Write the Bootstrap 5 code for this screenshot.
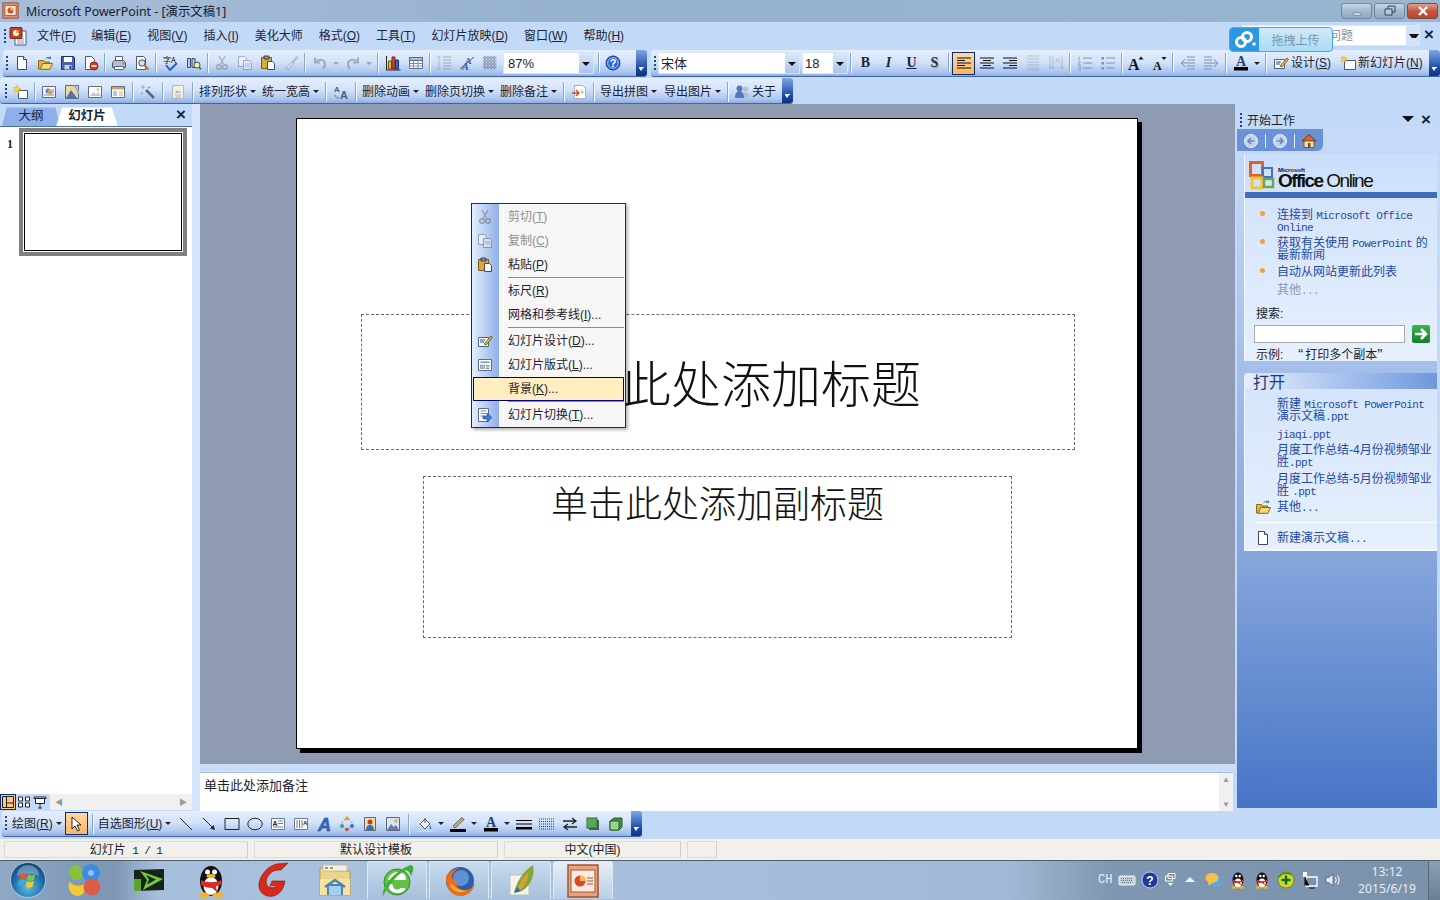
<!DOCTYPE html>
<html>

<head>
  <meta charset="utf-8">
  <meta name="viewport" content="width=device-width">
  <title>Microsoft PowerPoint - [演示文稿1]</title>
  <link href="https://cdn.jsdelivr.net/npm/bootstrap@5.3.2/dist/css/bootstrap.min.css" rel="stylesheet" type="text/css" />
  <script src="https://cdn.jsdelivr.net/npm/bootstrap@5.3.2/dist/js/bootstrap.bundle.min.js"></script>
  <style>
    html, body { margin: 0; height: 900px; overflow: hidden; }
    body { font: 12px/1.2 "Liberation Sans", "Noto Sans CJK SC", sans-serif; color: #1b2230; background: #c3d9f8; }
    .app { width: 1440px; height: 900px; }

    /* title bar */
    .titlebar { height: 22px; background: linear-gradient(90deg, #a6bdd9, #97b2cd 40%, #9ab5d0); }
    .titlebar .apptitle { font: 12.4px "Noto Sans", "Noto Sans CJK SC", sans-serif; margin-left: 7px; color: #14202e; }
    .ttl-ic { width: 17px; height: 17px; margin-left: 2px; }
    .winbtn { width: 31px; height: 16px; margin-left: 2px; border: 1px solid #6f879f; border-radius: 3px; background: linear-gradient(#c6d6e6, #a4b9cf 50%, #8fa8c0); display: flex; align-items: center; justify-content: center; }
    .winbtn svg { width: 14px; height: 12px; }
    .winbtn.closer { background: linear-gradient(#e0a090, #c8563f 50%, #b84530); border-color: #7c4a40; }
    .win-group { margin-left: auto; margin-right: 2px; }

    /* menu bar */
    .menubar { height: 29px; position: relative; }
    .menu-ic { width: 20px; height: 20px; margin-left: 2px; }
    .menu-entry { padding: 0 8px; white-space: nowrap; color: #1c2434; }
    .menu-first { margin-left: 1px; padding-right: 7px; }
    .helpbox { position: absolute; left: 1242px; top: 3px; width: 178px; height: 21px; background: #fff; border: 1px solid #dbe6f6; color: #8b8f98; padding: 3px 2px; white-space: nowrap; overflow: hidden; }
    .helpbox i { position: absolute; right: 0; top: 0; width: 13px; height: 19px; background: #d3e2f8; }
    .helpbox i::after { content: ""; display: block; border: 3.5px solid transparent; border-top: 4px solid #111; margin: 8px 0 0 3px; }
    .helpclose { position: absolute; left: 1424px; top: 5px; font: 700 17px/15px "Liberation Sans", sans-serif; color: #222; }

    /* cloud upload widget lying over the help box */
    .uploader { position: absolute; left: 1229px; top: 27px; width: 104px; height: 25px; border: 1px solid #4aa7e0; border-radius: 4px; overflow: hidden; z-index: 5; background: linear-gradient(#cfeafa, #a8dcf5); color: #7f93a6; }
    .uploader .cloud { width: 29px; height: 100%; background: #2a98e2; }
    .uploader .cloud svg { width: 24px; height: 20px; }
    .uploader .uptext { flex: 1; text-align: center; font-size: 12px; padding-top: 3px; }

    /* toolbars */
    .tbrow { height: 27px; }
    .tbar { height: 27px; background: linear-gradient(#e4effe, #d4e3fa 45%, #aac6ef 85%, #8dade3); border-bottom: 1px solid #40689f; border-radius: 3px; padding-left: 3px; }
    .tbar.std { width: 644px; margin-left: 3px; }
    .tbar.fmt { width: 789px; margin-left: 4px; border-radius: 3px 0 0 3px; }
    .tbar.ext { width: 793px; margin-top: 1px; height: 26px; padding-left: 5px; padding-top: 2px; }
    .tbar.ext .tail { margin-top: -2px; height: 25px; }
    .tbar.drawbar { width: 640px; height: 26px; margin-left: 2px; }
    .grip { width: 2px; height: 15px; margin: 0 2px 0 0; flex: none; background: repeating-linear-gradient(#2a4374 0 2px, transparent 2px 4px); }
    .tbtn { width: 23px; height: 23px; flex: none; display: flex; align-items: center; justify-content: center; }
    .tbtn svg { width: 16px; height: 16px; }
    .tbtn.on { background: linear-gradient(#ffd9a0, #fdb45f); border: 1px solid #0b2a7a; }
    .tbtn.off svg { filter: grayscale(1) opacity(.42); }
    .tsep { width: 1px; height: 20px; margin: 0 2px; flex: none; background: #89a5d2; box-shadow: 1px 0 #f4f8ff; }
    .tsep.wide { margin: 0 3px 0 2px; }
    .tsep.wider { margin: 0 3px; }
    .tsep.widest { margin: 0 4px; }
    .caret-sm { width: 10px; flex: none; display: flex; justify-content: center; }
    .caret-sm::after { content: ""; border: 3px solid transparent; border-top: 3px solid #1b2230; margin-top: 3px; }
    .caret-sm.off::after { border-top-color: #98a6bd; }
    .tlabel { white-space: nowrap; padding: 0 3px; display: flex; align-items: center; }
    .tlabel svg { width: 16px; height: 16px; margin-right: 2px; }
    .tlabel .caret-in { border: 3px solid transparent; border-top: 3px solid #1b2230; margin: 3px 0 0 3px; }
    .lbl-gap { margin-left: 3px; }
    .lbl-gap1 { margin-left: 1px; }
    .combo { height: 22px; background: #fff; border: 1px solid #d9e5f7; position: relative; padding: 3px 2px; flex: none; font-size: 13px; }
    .combo::after { content: ""; position: absolute; right: 0; top: 0; bottom: 0; width: 14px; background: linear-gradient(#dbe8fb, #a9c5ee); }
    .combo::before { content: ""; position: absolute; z-index: 1; right: 3px; top: 9px; border: 4px solid transparent; border-top: 4px solid #111; }
    .combo-zoom { width: 91px; margin-left: 2px; padding-left: 4px; }
    .combo-font { width: 142px; }
    .combo-size { width: 46px; margin-left: 2px; }
    .tail { width: 11px; height: 100%; flex: none; margin-left: auto; position: relative; background: linear-gradient(#7fa6e8, #1c4aa2 70%, #0d3188); border-radius: 0 3px 3px 0; }
    .tail::before { content: ""; position: absolute; left: 3px; bottom: 8px; width: 5px; height: 1px; background: #fff; }
    .tail::after { content: ""; position: absolute; left: 3px; bottom: 3px; border: 2.5px solid transparent; border-top: 3px solid #fff; }
    .glyph { font: 700 14px/1 "Liberation Serif", serif; color: #1c2434; }
    .glyph.ital { font-style: italic; }
    .glyph.under { text-decoration: underline; }
    .glyph.shadowed { color: #333; text-shadow: 1px 1px 1px #8d98aa; }

    /* workspace */
    .workspace { height: 707px; }
    .leftcol { width: 192px; }
    .tabstrip { height: 20px; border-bottom: 1px solid #4d6fa8; position: relative; margin-top: 3px; }
    .pane-tab { position: absolute; top: 0; height: 19px; text-align: center; padding-top: 2px; font-size: 12.5px; }
    .tab-outline { left: 2px; width: 58px; background: #8db0ea; clip-path: polygon(8% 0, 92% 0, 100% 100%, 0 100%); }
    .tab-slides { left: 56px; width: 62px; background: #fff; font-weight: 700; clip-path: polygon(10% 0, 90% 0, 100% 100%, 0 100%); }
    .stripclose { position: absolute; right: 6px; top: 0; font: 700 17px/15px "Liberation Sans", sans-serif; color: #222; }
    .thumbs { background: #fff; height: 667px; padding: 1px 0 0 7px; }
    .thumbnum { font: 700 12px/1 "Liberation Serif", serif; width: 12px; margin-top: 10px; }
    .thumbframe { width: 168px; height: 128px; border: 4px solid #808080; padding: 1px; background: #fff; }
    .thumbframe div { height: 100%; border: 1px solid #000; }
    .viewbar { height: 16px; }
    .viewbtn { width: 16px; height: 16px; flex: none; display: flex; align-items: center; justify-content: center; }
    .viewbtn svg { width: 14px; height: 14px; }
    .viewbtn.on { background: #fdc886; border: 1px solid #0b2a7a; }
    .viewfill { width: 2px; }
    .hscroll { flex: 1; background: #f0f0f0; color: #9a9a9a; font-size: 8px; padding: 0 5px; height: 16px; }
    .vsplit { width: 8px; background: #d5e4fb; }

    .centercol { width: 1035px; }
    .canvasarea { height: 660px; background: #8f9ab3; padding: 14px 1px 0 0; }
    .slide { width: 842px; height: 631px; background: #fff; border: 1px solid #000; box-shadow: 4px 4px 0 #000; position: relative; }
    .holder { position: absolute; border: 1px dashed #6b6b6b; color: #111; text-align: center; font-family: "Liberation Serif", "Noto Sans CJK SC", serif; font-weight: 300; }
    .holder-title { left: 64px; top: 195px; width: 714px; height: 136px; font-size: 50px; line-height: 142px; padding-left: 6px; }
    .holder-sub { left: 126px; top: 357px; width: 589px; height: 162px; font-size: 37px; line-height: 58px; }
    .notes-gap { height: 8px; background: #c9dcf8; }
    .notes { height: 39px; background: #fff; width: 1033px; border-top: 1px solid #a9bfe3; padding: 5px 4px; position: relative; font-size: 13px; }
    .vscroll { position: absolute; right: 0; top: 0; bottom: 0; width: 14px; background: #f0f0f0; color: #9a9a9a; font-size: 8px; text-align: center; padding: 2px 0; }
    .hsplit { width: 2px; }

    /* task pane */
    .taskpane { width: 200px; height: 704px; background: linear-gradient(#c8dcf9, #c3d8f7 10%, #86a6dc 64%, #4775c6); color: #1f4aa4; }
    .taskhead { height: 25px; background: #c3d9f8; color: #1b2230; padding: 8px 0 0 3px; position: relative; font-size: 12px; }
    .taskhead .grip { margin-right: 5px; }
    .taskhead .tri { position: absolute; right: 23px; top: 12px; border: 6px solid transparent; border-top: 6px solid #111; border-bottom: 0; }
    .taskhead .stripclose { right: 6px; top: 8px; }
    .tasknav { width: 86px; height: 22px; background: #6a91d6; border-radius: 0 0 6px 0; padding: 2px 0 0 6px; gap: 6px; }
    .tasknav svg { width: 16px; height: 16px; }
    .tasknav i { width: 1px; height: 14px; background: #e5eefb; }
    .taskcard { margin: 3px 0 0 7px; border-left: 1px solid #f2f7ff; }
    .officehead { height: 38px; padding: 7px 0 0 4px; color: #111; background: linear-gradient(#cbdefa, #d2e3fb); }
    .officehead svg { width: 26px; height: 29px; }
    .office-word { margin: 6px 0 0 3px; line-height: 1; }
    .office-word small { display: block; font: 700 6px/6px "Liberation Sans", sans-serif; margin-bottom: -2px; }
    .office-word b { font: 700 19px/20px "Liberation Sans", sans-serif; letter-spacing: -1.55px; }
    .office-word span { font: 400 19px/20px "Liberation Sans", sans-serif; letter-spacing: -1.5px; }
    .cardbar { height: 6px; background: #3f6ebf; }
    .cardbody { background: linear-gradient(#d4e4fb, #e6f0fd); height: 163px; padding: 11px 0 0 0; }
    .tp-link { position: relative; padding-left: 32px; padding-right: 2px; line-height: 12px; margin-bottom: 4px; color: #1f4aa4; font-size: 12px; }
    .tp-link.dot::before { content: ""; position: absolute; left: 15px; top: 2px; width: 5px; height: 5px; border-radius: 50%; background: #f0a038; }
    .tp-link.muted { color: #8c98ac; margin-top: 6px; }
    .mono { font: 11px/0 "Liberation Mono", monospace; letter-spacing: -.6px; }
    .tp-label { color: #1b2230; padding-left: 11px; font-size: 12px; line-height: 12px; }
    .tp-label.gap12 { margin-top: 12px; }
    .tp-example { margin-left: 15px; }
    .qt { font-size: 15px; line-height: 0; letter-spacing: 2px; }
    .tp-search { padding-left: 9px; margin: 5px 0 6px; }
    .tp-search .form-control { width: 151px; height: 18px; min-height: 0; padding: 0 2px; border: 1px solid #a8a8a8; border-radius: 0; font-size: 12px; background: #fff; }
    .go-btn { width: 18px; height: 18px; margin-left: 7px; background: linear-gradient(#3cb54a, #12802a); border-radius: 2px; }
    .go-btn svg { width: 18px; height: 18px; display: block; }
    .sechead { height: 16px; margin: 12px 0 0 7px; background: linear-gradient(90deg, #e4eefc, #a9c3ef 50%, #6f97dd); border-radius: 4px 0 0 0; color: #1c3a73; font-size: 16px; line-height: 20px; padding-left: 9px; }
    .secbody { margin: 0 0 0 7px; height: 162px; background: linear-gradient(#d6e5fb, #e6f0fd); border-left: 1px solid #f2f7ff; border-bottom: 2px solid #f2f7ff; padding-top: 9px; }
    .tp-link.gap5 { margin-bottom: 5px; }
    .secbody .tp-link.gap6 { margin-bottom: 6px; }
    .secbody .tp-link.gap3 { margin-bottom: 3px; }
    .tp-ic { position: absolute; left: 10px; top: -2px; width: 16px; height: 16px; }
    .secdiv { margin: 9px 0 9px 10px; border-top: 1px solid #fff; }
    .pane-edge { width: 3px; }

    /* status + taskbar */
    .statusbar { height: 22px; background: #f1f0ea; border-top: 1px solid #c7d6ea; padding: 2px 0 0 4px; gap: 6px; }
    .statcell { height: 17px; border: 1px solid #dcdcd2; border-right-color: #cfcfc5; text-align: center; line-height: 16px; color: #222; }
    .statcell .mono { margin-left: 3px; }
    .w244 { width: 244px; } .w177 { width: 177px; } .w30 { width: 30px; }
    .taskbar { height: 40px; background: linear-gradient(90deg, #8fa9c7, #7f98b5 6%, #7f98b5 8%, #a5bfdc 11%, #a9c2de 30%, #a3bad6 70%, #7f97b0 77%, #7a92ab); border-top: 1px solid #4f5f70; }
    .tk-slot { width: 62px; height: 39px; flex: none; display: flex; align-items: center; justify-content: center; }
    .tk-slot svg { width: 36px; height: 36px; }
    .tk-first { width: 56px; }
    .tk-second { padding-right: 6px; }
    .tk-open { width: 60px; height: 38px; margin-right: 2px; border: 1px solid #dfe9f4; border-bottom: 0; border-radius: 3px 3px 0 0; background: linear-gradient(#c9dbee, #a6bfdb); }
    .tk-open.start { margin-left: 1px; }
    .tk-lit { background: linear-gradient(#e6eff8, #b9cee6); }
    .tray { margin-left: auto; height: 100%; color: #eef3f8; }
    .tray svg { width: 18px; height: 18px; display: block; flex: none; }
    .tray-cell { width: 23.5px; flex: none; display: flex; justify-content: center; }
    .tray-cell.w19 { width: 19px; }
    .tray-cell.w26 { width: 26px; }
    .tray-cell.w16 { width: 16px; }
    .tray-cell.w22 { width: 22px; }
    .tray-cell.w25 { width: 25px; }
    .tray-cell.w23 { width: 23px; }
    .tray-ch { font: 12px "Liberation Mono", monospace; margin-right: 5px; }
    .clock { width: 66px; margin-left: 9px; text-align: center; font: 12.2px/17px "Noto Sans", sans-serif; color: #e8eef5; }
    .show-desk { width: 12px; height: 100%; margin-left: 8px; background: linear-gradient(#8d9fb2, #6b7f94); border-left: 1px solid #58697b; }

    /* context menu */
    .ctx.dropdown-menu { position: absolute; left: 471px; top: 203px; width: 155px; height: 225px; padding: 1px; margin: 0; min-width: 0; border: 1px solid #002d96; border-radius: 0; background: linear-gradient(90deg, #e3effe, #8fafe8 27px, #f6f6f6 27px); box-shadow: 2px 2px 3px rgba(0, 0, 0, .3); font-size: 12px; z-index: 6; }
    .ctx .dropdown-item { height: 24px; padding: 0 0 0 35px; color: #1b2230; line-height: 24px; position: relative; background: transparent; }
    .ctx .dropdown-item.disabled { color: #8f8f8f; }
    .ctx .dropdown-item svg { position: absolute; left: 4px; top: 4px; width: 16px; height: 16px; }
    .ctx .dropdown-item.disabled svg { filter: grayscale(1) opacity(.5); }
    .ctx .dropdown-item.lit { background: #ffeec2; border: 1px solid #000080; padding-left: 34px; line-height: 22px; }
    .ctx .dropdown-divider { margin: 0 0 1px 35px; border-top: 1px solid #6e8fc9; opacity: 1; height: 0; }
    u { text-underline-offset: 1px; }
  </style>
</head>

<body>
  <svg width="0" height="0" class="position-absolute">
    <defs>
      <symbol id="i-new" viewBox="0 0 16 16"><path d="M3.500 1.500h6l3 3v10h-9z" fill="#fff" stroke="#3a4a66"/><path d="M9.500 1.500v3h3" fill="#dfe6f2" stroke="#3a4a66"/></symbol>
      <symbol id="i-open" viewBox="0 0 16 16"><path d="M1.500 5.500h5l1 1.500h5v7h-11z" fill="#e2b53d" stroke="#8c6a14"/><path d="M3.200 14.300 5.800 8.500h9.700l-2.600 5.800z" fill="#f8da78" stroke="#8c6a14"/><path d="M8.500 4c1.500-2 3.500-2.200 5-.5M13.500 3.500v-2M13.500 3.500h-2" fill="none" stroke="#3a6cc0"/></symbol>
      <symbol id="i-save" viewBox="0 0 16 16"><path d="M1.500 1.500h12l1 1v12h-13z" fill="#4d61b8" stroke="#1e2d70"/><path d="M4 2h8v5H4z" fill="#fff"/><path d="M4.500 10h7v4.500h-7z" fill="#c9d2ec"/><path d="M9.500 11h1.500v3H9.500z" fill="#1e2d70"/></symbol>
      <symbol id="i-perm" viewBox="0 0 16 16"><path d="M2.500 1.500h6l3 3v10h-9z" fill="#fff" stroke="#4a5a76"/><circle cx="11" cy="11" r="4" fill="#d8402a" stroke="#8e2312"/><path d="M8.500 11h5" stroke="#fff" stroke-width="1.600"/></symbol>
      <symbol id="i-print" viewBox="0 0 16 16"><path d="M4.500 1.500h7v5h-7z" fill="#fff" stroke="#5b6678"/><path d="M1.500 7.500l2-2h9l2 2v5h-13z" fill="#b8bfca" stroke="#4d5868"/><path d="M3.500 11.500h9v3h-9z" fill="#fff" stroke="#5b6678"/><circle cx="12.500" cy="8.500" r="1" fill="#2ea84a"/></symbol>
      <symbol id="i-preview" viewBox="0 0 16 16"><path d="M2.500 1.500h7l2 2v11h-9z" fill="#fff" stroke="#4a5a76"/><circle cx="8" cy="8" r="3.200" fill="#cfe3f7" stroke="#5a4a2a"/><path d="M10.500 10.500l4 4" stroke="#a8792a" stroke-width="2"/></symbol>
      <symbol id="i-spell" viewBox="0 0 16 16"><text x="0" y="8" font-size="8" font-family="Noto Sans CJK SC, sans-serif" fill="#111">字A</text><path d="M3 10l4 5 7-7" fill="none" stroke="#2b5fc0" stroke-width="2"/></symbol>
      <symbol id="i-research" viewBox="0 0 16 16"><path d="M1.500 3.500h3v9h-3zM6 3.500h3v9H6z" fill="#c3c9e8" stroke="#3d4a78"/><circle cx="11" cy="10" r="3" fill="#f3f0a4" stroke="#4c5630"/><path d="M13 12l2 2.500" stroke="#4c8a30" stroke-width="2"/></symbol>
      <symbol id="i-cut" viewBox="0 0 16 16"><path d="M5 1l4.500 8M11 1L6.500 9" stroke="#5c6a80" stroke-width="1.400"/><circle cx="5" cy="12" r="2.300" fill="none" stroke="#3a66b0" stroke-width="1.400"/><circle cx="11" cy="12" r="2.300" fill="none" stroke="#3a66b0" stroke-width="1.400"/></symbol>
      <symbol id="i-copy" viewBox="0 0 16 16"><path d="M1.500 1.500h6l2 2v8h-8z" fill="#fff" stroke="#46608c"/><path d="M6.500 5.500h6l2 2v7h-8z" fill="#eef3fb" stroke="#46608c"/><path d="M8 9h5M8 11h5" stroke="#7d93b8"/></symbol>
      <symbol id="i-paste" viewBox="0 0 16 16"><path d="M1.500 2.500h10v11h-10z" fill="#d9a941" stroke="#7a5a12"/><path d="M4 1h5v3H4z" fill="#8a8f99" stroke="#444"/><path d="M7.500 6.500h5l2 2v6h-7z" fill="#fff" stroke="#3c4c68"/></symbol>
      <symbol id="i-brush" viewBox="0 0 16 16"><path d="M9 7l5-5.500 1 1L10 8z" fill="#b8bdc6" stroke="#5a6270"/><path d="M9 7l1.500 1.500L6 14H2z" fill="#eee" stroke="#6b7280"/></symbol>
      <symbol id="i-undo" viewBox="0 0 16 16"><path d="M3 2.500v5h5" fill="none" stroke="#3a66b0" stroke-width="2"/><path d="M3.500 7C6 3.500 12.500 4 13 9c.2 2-1 3.500-2 4.500" fill="none" stroke="#3a66b0" stroke-width="2"/></symbol>
      <symbol id="i-redo" viewBox="0 0 16 16"><path d="M13 2.500v5H8" fill="none" stroke="#3a66b0" stroke-width="2"/><path d="M12.500 7C10 3.500 3.500 4 3 9c-.2 2 1 3.500 2 4.500" fill="none" stroke="#3a66b0" stroke-width="2"/></symbol>
      <symbol id="i-chart" viewBox="0 0 16 16"><path d="M1.500 1v14h14" fill="none" stroke="#222"/><path d="M3.500 6h3v8h-3z" fill="#e8b92a" stroke="#6b5410"/><path d="M7 2h3v12H7z" fill="#d84a34" stroke="#6e2010"/><path d="M10.500 5h3v9h-3z" fill="#3c68c4" stroke="#1a3070"/></symbol>
      <symbol id="i-table" viewBox="0 0 16 16"><path d="M1.500 2.500h13v11h-13z" fill="#fff" stroke="#5b6b88"/><path d="M1.500 2.500h13v3h-13z" fill="#a9bfe3" stroke="#5b6b88"/><path d="M1.500 8.500h13M1.500 11h13M5.500 5.500v8M10 5.500v8" stroke="#7f90ad"/></symbol>
      <symbol id="i-slayout" viewBox="0 0 16 16"><path d="M1.500 2.500h13v11h-13z" fill="#fff" stroke="#5b6b88"/><path d="M3.500 4.500h9v1.500h-9z" fill="#7f90ad"/><path d="M3.500 8h4v3.500h-4z" fill="#a9bfe3" stroke="#5b6b88" stroke-width=".5"/><path d="M9 8.500h3.500M9 10h3.500M9 11.500h3.500" stroke="#7f90ad"/></symbol>
      <symbol id="i-transition" viewBox="0 0 16 16"><path d="M1.500 1.500h10v13h-10z" fill="#fff" stroke="#5b6b88"/><path d="M3.500 4h6M3.500 6.500h6M3.500 9h4" stroke="#7f90ad"/><path d="M6 9h4V6l5 4.500-5 4.500v-3H6z" fill="#3f78d8" stroke="#1c4aa2" stroke-width=".6"/></symbol>
      <symbol id="i-expand" viewBox="0 0 16 16"><path d="M7 2h8M7 5h8M7 8h8M7 11h8M7 14h8" stroke="#56637a"/><path d="M3 1v14M1 3l2-2 2 2M1 13l2 2 2-2" fill="none" stroke="#7b8799"/></symbol>
      <symbol id="i-showfmt" viewBox="0 0 16 16"><text x="6" y="9" font-size="9" font-weight="700" font-family="Liberation Serif, serif" fill="#3c5a98">A</text><text x="3" y="15" font-size="10" font-style="italic" font-weight="700" font-family="Liberation Serif, serif" fill="#2c58b8">A</text><path d="M1 14L15 2" stroke="#46546e"/></symbol>
      <symbol id="i-grid" viewBox="0 0 16 16"><path d="M1 3h14M1 6h14M1 9h14M1 12h14M3 1v14M6 1v14M9 1v14M12 1v14" stroke="#5c6c8c" stroke-dasharray="1 .5"/></symbol>
      <symbol id="i-help" viewBox="0 0 16 16"><circle cx="8" cy="8" r="7" fill="#2f6bd8" stroke="#123c96"/><circle cx="8" cy="8" r="5.300" fill="none" stroke="#bcd2f5" stroke-width=".8"/><text x="8" y="12" text-anchor="middle" font-size="11" font-weight="700" font-family="Liberation Sans, sans-serif" fill="#fff">?</text></symbol>
      <symbol id="i-left" viewBox="0 0 16 16"><path d="M1 3h14M1 5.500h8M1 8h14M1 10.500h8M1 13h14" stroke="#111" stroke-width="1.200"/></symbol>
      <symbol id="i-center" viewBox="0 0 16 16"><path d="M1 3h14M4 5.500h8M1 8h14M4 10.500h8M1 13h14" stroke="#111" stroke-width="1.200"/></symbol>
      <symbol id="i-right" viewBox="0 0 16 16"><path d="M1 3h14M7 5.500h8M1 8h14M7 10.500h8M1 13h14" stroke="#111" stroke-width="1.200"/></symbol>
      <symbol id="i-dist" viewBox="0 0 16 16"><path d="M2 1h12M2 4h12M2 7h12M2 10h12M2 13h12M2 15h12" stroke="#7b8799"/></symbol>
      <symbol id="i-vert" viewBox="0 0 16 16"><path d="M2 1v13M5 1v13M14 1v13M1 12l1 2 1-2M4 12l1 2 1-2M13 12l1 2 1-2" fill="none" stroke="#7b8799"/><text x="7" y="8" font-size="8" font-family="Liberation Sans, sans-serif" fill="#7b8799">A</text></symbol>
      <symbol id="i-num" viewBox="0 0 16 16"><path d="M6 3h9M6 8h9M6 13h9" stroke="#8492a8"/><path d="M2 1.500v4M1 7h2.500L1 10h3M1 12h3l-1.500 1.500L4 15H1" fill="none" stroke="#8492a8" stroke-width=".8"/></symbol>
      <symbol id="i-bullet" viewBox="0 0 16 16"><path d="M6 3h9M6 8h9M6 13h9" stroke="#8492a8"/><path d="M1.500 2h2.500v2.500H1.500zM1.500 7h2.500v2.500H1.500zM1.500 12h2.500v2.500H1.500z" fill="#8492a8"/></symbol>
      <symbol id="i-growA" viewBox="0 0 16 16"><text x="0" y="15" font-size="16" font-weight="700" font-family="Liberation Serif, serif" fill="#111">A</text><path d="M10.500 4.500l2.500-3 2.500 3z" fill="#111"/></symbol>
      <symbol id="i-shrinkA" viewBox="0 0 16 16"><text x="2" y="15" font-size="12" font-weight="700" font-family="Liberation Serif, serif" fill="#111">A</text><path d="M10.500 2l2.500 3 2.500-3z" fill="#111"/></symbol>
      <symbol id="i-outdent" viewBox="0 0 16 16"><path d="M7 2h8M7 5h8M1 8h14M7 11h8M7 14h8" stroke="#8492a8"/><path d="M5 4L1.500 8 5 12" fill="none" stroke="#7c8aa4"/></symbol>
      <symbol id="i-indent" viewBox="0 0 16 16"><path d="M1 2h8M1 5h8M1 8h14M1 11h8M1 14h8" stroke="#8492a8"/><path d="M11 4l3.500 4L11 12" fill="none" stroke="#7c8aa4"/></symbol>
      <symbol id="i-fontcolor" viewBox="0 0 16 16"><text x="8" y="11" text-anchor="middle" font-size="14" font-weight="700" font-family="Liberation Serif, serif" fill="#2b3f78">A</text><path d="M1 12h14v3.500H1z" fill="#000"/></symbol>
      <symbol id="i-design" viewBox="0 0 16 16"><path d="M1.500 4.500h10v9h-10z" fill="#fff" stroke="#4a6290"/><path d="M3 7h5M3 9h4" stroke="#5d85c8" stroke-width="1.500"/><path d="M7 11L14 3l1.500 1.300L9 12z" fill="#e9c254" stroke="#7a5d12"/></symbol>
      <symbol id="i-newslide" viewBox="0 0 16 16"><path d="M4.500 5.500h11v9h-11z" fill="#fff" stroke="#4a5a76"/><path d="M1 2l1.500 1L4 .5 4.500 3 7 3 5.500 4.500l.5 2.500-2.500-1L1.500 7 2 4.500z" fill="#f5d64a" stroke="#d8a916" stroke-width=".5"/></symbol>
      <symbol id="i-pptdoc" viewBox="0 0 20 20"><path d="M7 5h11v14H7z" fill="#fff" stroke="#475a80"/><path d="M9 13h7M9 15h7M9 17h7" stroke="#8a9ab8"/><rect x="2" y="1.500" width="12" height="11" rx="1" fill="#c33e22" stroke="#7a2612"/><circle cx="8" cy="7" r="3" fill="#fff"/><path d="M8 7V4a3 3 0 0 1 3 3z" fill="#e5a33a"/></symbol>
      <symbol id="i-ppt" viewBox="0 0 18 18"><rect x="1" y="1" width="16" height="16" fill="#e7a380" stroke="#9e3f1c"/><rect x="3" y="3.500" width="12" height="11" fill="#f7e7dc" stroke="#ae4a22"/><circle cx="9" cy="9" r="3.200" fill="#d64a26"/><path d="M9 9V5.800A3.200 3.200 0 0 1 12.200 9z" fill="#f0bc5a"/></symbol>
      <symbol id="i-newsun" viewBox="0 0 16 16"><path d="M5.500 6.500h9v8h-9z" fill="#fff" stroke="#4a5a76"/><path d="M4 1l1 3 3 .5-2.500 1.500.5 3-2-2-3 1 1-3L0 3.500 3 3.500z" fill="#f5d64a" stroke="#d8a916" stroke-width=".5"/></symbol>
      <symbol id="i-pic1" viewBox="0 0 16 16"><path d="M1.500 2.500h13v11h-13z" fill="#f3f6fc" stroke="#5b6b88"/><circle cx="7" cy="7" r="2.500" fill="#5b81c6"/><circle cx="9" cy="8" r="2.500" fill="#dca44c"/><path d="M11 6h2M11 8h2M3 11h10" stroke="#7f90ad"/></symbol>
      <symbol id="i-pic2" viewBox="0 0 16 16"><path d="M1.500 1.500h13v13h-13z" fill="#e9d9a0" stroke="#5b6b88"/><path d="M2 14L7 6l6 8z" fill="#4d73b6"/><path d="M10 2c3 2 4 5 4 8" stroke="#9ab4de" stroke-width="2" fill="none"/></symbol>
      <symbol id="i-pic3" viewBox="0 0 16 16"><path d="M1.500 2.500h13v11h-13z" fill="#fff" stroke="#5b6b88"/><path d="M3 12l3.500-4 2.500 2.500L11 8l3 4z" fill="#b9c8df"/><circle cx="11" cy="5.500" r="1.300" fill="#e8b64c"/></symbol>
      <symbol id="i-pic4" viewBox="0 0 16 16"><path d="M1.500 2.500h13v11h-13z" fill="#fff" stroke="#5b6b88"/><path d="M2 3h12v2.500H2z" fill="#e0a25a"/><path d="M3 7h4v5H3z" fill="#b9c8df"/><path d="M9 7h4v5H9z" fill="#f0d9a0"/></symbol>
      <symbol id="i-wand" viewBox="0 0 16 16"><path d="M6 6l8 8" stroke="#5b6678" stroke-width="2.500"/><path d="M3 1v4M1 3h4M9 2v3M7.500 3.500h3M2 8v2M1 9h2" stroke="#8ea7d0"/></symbol>
      <symbol id="i-layout" viewBox="0 0 16 16"><path d="M2.500 1.500h11v13h-11z" fill="#f5f0dc" stroke="#aeb6c6"/><path d="M5 11h6M5 13h6" stroke="#aeb6c6"/><path d="M5 9l2-3 1.500 2 1-1 1.500 2z" fill="#aeb6c6"/></symbol>
      <symbol id="i-fontsw" viewBox="0 0 16 16"><text x="1" y="8" font-size="8" font-weight="700" font-family="Liberation Sans, sans-serif" fill="#4d5e7e">A</text><text x="7" y="15" font-size="11" font-weight="700" font-family="Liberation Sans, sans-serif" fill="#4d5e7e">A</text><path d="M2 11c1 3 2 3 4 3" fill="none" stroke="#c44d3a"/></symbol>
      <symbol id="i-import" viewBox="0 0 16 16"><path d="M3.500 1.500h8l3 3v10h-11z" fill="#fff" stroke="#a7b0c0"/><path d="M1 9h7M5 6l3 3-3 3" fill="none" stroke="#cc4730" stroke-width="1.400"/><path d="M10 5l3 4h-3z" fill="#e6b75c"/></symbol>
      <symbol id="i-person" viewBox="0 0 16 16"><circle cx="11.500" cy="5" r="2.500" fill="#b8bfca"/><path d="M8 14c0-4 1.500-6 3.500-6s3.500 2 3.500 6z" fill="#b8bfca"/><circle cx="5.500" cy="4.500" r="3" fill="#4f7bbb"/><path d="M1 14c0-5 2-7 4.500-7s4.500 2 4.500 7z" fill="#4f7bbb"/></symbol>
      <symbol id="i-line" viewBox="0 0 16 16"><path d="M2 2l12 12" stroke="#222"/></symbol>
      <symbol id="i-arrowline" viewBox="0 0 16 16"><path d="M2 2l10 10" stroke="#222"/><path d="M14 14l-5-1.500L12.500 9z" fill="#222"/></symbol>
      <symbol id="i-rect" viewBox="0 0 16 16"><path d="M1 2.500h14v11H1z" fill="none" stroke="#222"/></symbol>
      <symbol id="i-oval" viewBox="0 0 16 16"><ellipse cx="8" cy="8" rx="7.200" ry="5.800" fill="none" stroke="#222"/></symbol>
      <symbol id="i-textbox" viewBox="0 0 16 16"><path d="M1.500 2.500h13v11h-13z" fill="#fff" stroke="#6b7a96"/><text x="2.500" y="9.500" font-size="7" font-weight="700" font-family="Liberation Sans, sans-serif" fill="#222">A</text><path d="M8 5h5M8 7.500h5M3 11h10" stroke="#6b7a96"/></symbol>
      <symbol id="i-vtext" viewBox="0 0 16 16"><path d="M1.500 2.500h13v11h-13z" fill="#fff" stroke="#6b7a96"/><path d="M4 4v8M6.500 4v8M9 4v8" stroke="#6b7a96"/><text x="10" y="9" font-size="6" font-weight="700" font-family="Liberation Sans, sans-serif" fill="#222">A</text></symbol>
      <symbol id="i-wordart" viewBox="0 0 16 16"><text x="2" y="15" font-size="18" font-style="italic" font-weight="700" font-family="Liberation Sans, sans-serif" fill="#3a6cc8" stroke="#173a80" stroke-width=".5">A</text></symbol>
      <symbol id="i-diagram" viewBox="0 0 16 16"><circle cx="8" cy="8" r="5" fill="none" stroke="#7d8ea8" stroke-dasharray="2 2"/><circle cx="8" cy="2.500" r="2" fill="#e0a02e"/><circle cx="13" cy="10" r="2" fill="#3c74c8"/><circle cx="3" cy="10" r="2" fill="#3ca85a"/><circle cx="8" cy="13.500" r="1.800" fill="#d84a34"/></symbol>
      <symbol id="i-clipart" viewBox="0 0 16 16"><path d="M2.500 1.500h11v13h-11z" fill="#f1d9a6" stroke="#5b6678"/><circle cx="8" cy="6" r="2.500" fill="#a3492a"/><path d="M4 14c0-4 2-5 4-5s4 1 4 5z" fill="#3f6fb8"/></symbol>
      <symbol id="i-picture" viewBox="0 0 16 16"><path d="M1.500 1.500h13v13h-13z" fill="#d7e4f7" stroke="#5b6678"/><path d="M2 14l4-6 3 3 2-2 3 5z" fill="#5f7fae"/><circle cx="11" cy="5" r="1.800" fill="#e8a34c"/></symbol>
      <symbol id="i-fill" viewBox="0 0 16 16"><path d="M3 8l5-5 5 5-5 5z" fill="#eef1f6" stroke="#4a566b"/><path d="M8 2V7" stroke="#4a566b"/><path d="M13 9c1 1.500 2 3 1 4s-2-.5-1-4z" fill="#3c8ac8"/><path d="M0 14.500h16V16H0z" fill="#c7dcf5"/></symbol>
      <symbol id="i-pen" viewBox="0 0 16 16"><path d="M3 10L12 1.500l2 2L5 12z" fill="#e0b23c" stroke="#4c5f8a"/><path d="M0 13h16v3H0z" fill="#000"/></symbol>
      <symbol id="i-lines" viewBox="0 0 16 16"><path d="M0 4.500h16M0 8h16" stroke="#000"/><path d="M0 11h16v2.500H0z" fill="#000"/></symbol>
      <symbol id="i-dash" viewBox="0 0 16 16"><path d="M0 3h16M0 5.500h16M0 8h16M0 10.500h16M0 13h16" stroke="#2e3a50" stroke-dasharray="1 1"/></symbol>
      <symbol id="i-arrows" viewBox="0 0 16 16"><path d="M1 5h13M10 2l4 3-4 3M15 11H2M6 8l-4 3 4 3" fill="none" stroke="#222" stroke-width="1.300"/></symbol>
      <symbol id="i-shadow" viewBox="0 0 16 16"><rect x="4" y="4" width="10" height="10" fill="#4c5c4e"/><rect x="2" y="2" width="10" height="10" fill="#58a85c" stroke="#2d6f34"/></symbol>
      <symbol id="i-threed" viewBox="0 0 16 16"><path d="M2 5l4-3h8v9l-3 3H2z" fill="#3e8f48" stroke="#235a2c"/><path d="M2 5h9v9H2z" fill="#9fd08f" stroke="#235a2c"/></symbol>
      <symbol id="i-cursor" viewBox="0 0 16 16"><path d="M4 1v12l3-3 2.500 5 2-1L9 9h4z" fill="#fff" stroke="#222"/></symbol>
      <symbol id="i-normal" viewBox="0 0 14 14"><path d="M1.500 1.500h11v11h-11z" fill="none" stroke="#222"/><path d="M5.500 1.500v11M5.500 8h7" stroke="#222"/></symbol>
      <symbol id="i-sorter" viewBox="0 0 14 14"><path d="M1.500 2h4v4h-4zM8.500 2h4v4h-4zM1.500 8h4v4h-4zM8.500 8h4v4h-4z" fill="#fff" stroke="#222"/></symbol>
      <symbol id="i-show" viewBox="0 0 14 14"><path d="M1 2h12v1.500H1zM2.500 3.500h9v5h-9z" fill="#fff" stroke="#222"/><path d="M7 9v4M5 13h4" stroke="#222"/></symbol>
      <symbol id="i-back" viewBox="0 0 16 16"><circle cx="8" cy="8" r="6.500" fill="#c3d4ee" stroke="#edf3fb"/><path d="M11.500 8h-6M8 5L5 8l3 3" fill="none" stroke="#6d86ae" stroke-width="1.600"/></symbol>
      <symbol id="i-fwd" viewBox="0 0 16 16"><circle cx="8" cy="8" r="6.500" fill="#c3d4ee" stroke="#edf3fb"/><path d="M4.500 8h6M8 5l3 3-3 3" fill="none" stroke="#6d86ae" stroke-width="1.600"/></symbol>
      <symbol id="i-home" viewBox="0 0 16 16"><path d="M1 8l7-6.500L15 8z" fill="#d8662c" stroke="#7a3410"/><path d="M3 8h10v6.500H3z" fill="#f5e1a6" stroke="#7a5a20"/><path d="M7 10h2.500v4.500H7z" fill="#7c4a20"/></symbol>
      <symbol id="i-logo" viewBox="0 0 26 29"><rect x="1.500" y="1.500" width="12" height="13" fill="none" stroke="#e0602a" stroke-width="3"/><rect x="14" y="7" width="9" height="9" fill="none" stroke="#3f73c8" stroke-width="2"/><rect x="3" y="17" width="10" height="10" fill="none" stroke="#f0c338" stroke-width="3"/><rect x="15" y="18" width="9" height="8" fill="none" stroke="#69a84c" stroke-width="2.400"/></symbol>
      <symbol id="i-go" viewBox="0 0 18 18"><path d="M3 9h10M9 4l5 5-5 5" fill="none" stroke="#fff" stroke-width="2.600"/></symbol>
      <symbol id="i-cloud" viewBox="0 0 24 20"><circle cx="8" cy="12" r="4.500" fill="none" stroke="#fff" stroke-width="3"/><circle cx="14" cy="7" r="4.500" fill="none" stroke="#fff" stroke-width="3"/><circle cx="21" cy="14" r="1.800" fill="#fff"/></symbol>
      <symbol id="t-orb" viewBox="0 0 36 36"><defs><radialGradient id="orbfill" cx=".5" cy=".7" r=".7"><stop offset="0" stop-color="#5cc0e8"/><stop offset=".6" stop-color="#1f6fa8"/><stop offset="1" stop-color="#123f68"/></radialGradient></defs><circle cx="18" cy="18" r="17.500" fill="url(#orbfill)" stroke="#cfe2f2" stroke-width=".7"/><path d="M7 14c0-7 5-11 11-11s11 4 11 11c-6-3-16-3-22 0z" fill="#dff0fb" opacity=".35"/><path d="M10 12c2.500-1.500 4.500-1.500 7 0l-1 5.500c-2.500-1.500-4.500-1.500-7 0z" fill="#e8552e"/><path d="M18 12.300c2.500 1.500 4.500 1.500 7 0l-1 5.500c-2.500 1.500-4.500 1.500-7 0z" fill="#86c440"/><path d="M8.800 18.700c2.500-1.500 4.500-1.500 7 0l-1 5.500c-2.500-1.500-4.500-1.500-7 0z" fill="#3ea8e6"/><path d="M16.800 19c2.500 1.500 4.500 1.500 7 0l-1 5.500c-2.500 1.500-4.500 1.500-7 0z" fill="#f5c52c"/></symbol>
      <symbol id="t-color" viewBox="0 0 36 36"><path d="M18 14C17 6 12 2 8 3 3 5 2 13 6 17c3 2 8 1 12-3z" fill="#88c23c"/><circle cx="25" cy="11" r="9" fill="#3c8ce0"/><circle cx="25" cy="11" r="3" fill="#8cc0f0"/><path d="M3 20c-2 8 3 14 9 14 6-.5 8-6 6-12-4 3-10 2-15-2z" fill="#f3c92e"/><circle cx="26" cy="25" r="8.500" fill="#dd5c4a"/></symbol>
      <symbol id="t-play" viewBox="0 0 36 36"><path d="M3 8l30-1v21l-30 1z" fill="#172318"/><path d="M3 17h7v12H3z" fill="#5ba52f"/><path d="M9 9l23 8-20 11 4-10z" fill="#74c93a"/><path d="M15 13l10 4.500-9 5 2-5z" fill="#172318"/></symbol>
      <symbol id="t-qq" viewBox="0 0 36 36"><ellipse cx="18" cy="19" rx="11" ry="15" fill="#111"/><ellipse cx="18" cy="24" rx="7.500" ry="9" fill="#fff"/><circle cx="14.500" cy="10" r="2.500" fill="#fff"/><circle cx="21.500" cy="10" r="2.500" fill="#fff"/><ellipse cx="18" cy="14" rx="4.500" ry="2" fill="#f5b41e"/><path d="M8 18c6 3 14 3 20 0l1 4c-2 1.500-5 2-6 2l1 6-5-4c-4 0-8-1-11-3z" fill="#e02a20"/><ellipse cx="11" cy="33" rx="5.500" ry="2.500" fill="#f5b41e"/><ellipse cx="25" cy="33" rx="5.500" ry="2.500" fill="#f5b41e"/></symbol>
      <symbol id="t-red" viewBox="0 0 36 36"><path d="M22 2l11-1-7 7c-6-.5-10 1.500-13 6-3 5-2 9 1 11 3 1.500 6 .5 8-2l-7 1 2-5h13c-1 6-3 10-7 13-5 3.500-12 3-16-1-4.500-5-4-12 1-19 4-6 9-9 14-10z" fill="#d72a1c" stroke="#8a1208" stroke-width=".6"/></symbol>
      <symbol id="t-folder" viewBox="0 0 36 36"><path d="M3 6h12l3 3h15v24H3z" fill="#ecd488" stroke="#b69a4c"/><path d="M6 3h24v6H6z" fill="#f4f1e4" stroke="#c4bd9e"/><path d="M8 5h3v2H8zM13 5h3v2h-3z" fill="#7cb04c"/><path d="M3 17h30v16H3z" fill="#f7e39e"/><path d="M11 33V23h14v10" fill="#a2d0ea" stroke="#4a86b0" stroke-width="2"/><path d="M8 25l10-7 10 7" fill="none" stroke="#4a86b0" stroke-width="2.400"/></symbol>
      <symbol id="t-ie" viewBox="0 0 36 36"><circle cx="18" cy="19" r="13" fill="#62c248" stroke="#2d8a22"/><path d="M9 17h18c0-6-3.500-8-8-8-5 0-9 3-10 8zM9 21c.5 6 4.500 9 9.500 9 4 0 7-2 8-5h-5c-1 1-2 1.500-3.500 1.500-2.500 0-4.500-2-4.500-5.500z" fill="#fff"/><path d="M4 33C2 26 14 8 32 2c3 1 3 5 0 11-1-4-3-5-5-6C16 12 8 26 4 33z" fill="#3fae34"/></symbol>
      <symbol id="t-fox" viewBox="0 0 36 36"><circle cx="19" cy="18" r="14" fill="#2a5ea8"/><circle cx="20" cy="15" r="8" fill="#5f90cf"/><path d="M5 13c-1 12 6 21 16 20 7-1 12-6 13-13-2 5-7 8-12 7-5-1-8-5-6-9-3 0-5-2-5-5 1-4 4-7 8-8-5 0-10 3-14 8z" fill="#ec6d1e"/><path d="M9 22c3 7 11 9 17 5-4 1-9 0-12-3-2-2-4-3-5-2z" fill="#f7b32a"/></symbol>
      <symbol id="t-quill" viewBox="0 0 36 36"><path d="M7 12h19v20H7z" fill="#f5f3ec" stroke="#c4c0b0"/><path d="M11 30C13 20 20 8 30 2c2 8-1 20-11 26z" fill="#7fa83c"/><path d="M15 26c2-7 6-13 11-18-1 7-4 15-9 20z" fill="#e59c2e"/><path d="M11 30l3-6 4 4z" fill="#2a6eb8"/></symbol>
      <symbol id="t-ppt" viewBox="0 0 36 36"><rect x="3" y="2" width="30" height="32" fill="#e6a382" stroke="#a34a22" stroke-width="1.400"/><rect x="6" y="7" width="24" height="22" fill="#f8ebe2" stroke="#b25226"/><circle cx="15" cy="18" r="5.500" fill="#d64a26"/><path d="M15 18v-5.500a5.500 5.500 0 0 1 5.500 5.500z" fill="#f0bc5a"/><path d="M22 15h6M22 18h6M22 21h6" stroke="#b25226"/></symbol>
      <symbol id="y-kbd" viewBox="0 0 18 18"><rect x="1" y="5" width="16" height="9" rx="1" fill="#c8d0da" stroke="#eef2f6"/><path d="M3 7.500h12M3 9.500h12M4 11.500h10" stroke="#66778a" stroke-dasharray="1 1"/></symbol>
      <symbol id="y-help" viewBox="0 0 18 18"><circle cx="9" cy="9" r="8" fill="#1b3c9c" stroke="#b8c8ec"/><text x="9" y="13.500" text-anchor="middle" font-size="12" font-weight="700" font-family="Liberation Sans, sans-serif" fill="#fff">?</text></symbol>
      <symbol id="y-win" viewBox="0 0 18 18"><path d="M6 2.500h7v5H6zM3.500 5h7v5h-7z" fill="#73889e" stroke="#fff"/><path d="M6 12h5l-2.500 3z" fill="#fff"/></symbol>
      <symbol id="y-up" viewBox="0 0 18 18"><path d="M4 11l5-5 5 5z" fill="#eef2f6"/></symbol>
      <symbol id="y-weather" viewBox="0 0 18 18"><circle cx="11" cy="10" r="6" fill="#58a8e8"/><ellipse cx="7" cy="7" rx="6.500" ry="5" fill="#f3c34a"/><path d="M3 11l1 4 3-3z" fill="#f3c34a"/></symbol>
      <symbol id="y-qq" viewBox="0 0 18 18"><ellipse cx="9" cy="9" rx="5.500" ry="7.500" fill="#111"/><ellipse cx="9" cy="12" rx="3.800" ry="4.500" fill="#fff"/><circle cx="7.300" cy="5" r="1.200" fill="#fff"/><circle cx="10.700" cy="5" r="1.200" fill="#fff"/><path d="M4 9c3 1.500 7 1.500 10 0v2H11l1 3-3-2H4z" fill="#e02a20"/><ellipse cx="5.500" cy="16.500" rx="3" ry="1.300" fill="#f5b41e"/><ellipse cx="12.500" cy="16.500" rx="3" ry="1.300" fill="#f5b41e"/></symbol>
      <symbol id="y-360" viewBox="0 0 18 18"><circle cx="9" cy="9" r="8" fill="#d6d626" stroke="#6c8a1c"/><path d="M9 4.500v9M4.500 9h9" stroke="#0d6a28" stroke-width="2.400"/><path d="M2 6c3-4 9-5 13-2" fill="none" stroke="#2e8c34" stroke-width="1.500"/></symbol>
      <symbol id="y-net" viewBox="0 0 18 18"><path d="M5 6h11v9H5z" fill="#7b92ab" stroke="#fff" stroke-width="1.300"/><path d="M2 1h4v5H2z" fill="#fff"/><path d="M4 6v8h4M8 17h6" stroke="#111" stroke-width="1.100"/></symbol>
      <symbol id="y-vol" viewBox="0 0 18 18"><path d="M2 6.500h3L9 3v12l-4-3.500H2z" fill="#e6ecf2" stroke="#47566a" stroke-width=".7"/><path d="M11 6c1.500 2 1.500 4 0 6M13.500 4.500c2 3 2 6 0 9" fill="none" stroke="#e6ecf2" stroke-width="1.200"/></symbol>
    </defs>
  </svg>

  <div class="app d-flex flex-column position-relative">
    <header class="titlebar d-flex align-items-center">
      <svg class="ttl-ic"><use href="#i-ppt"/></svg>
      <span class="apptitle">Microsoft PowerPoint - [演示文稿1]</span>
      <div class="win-group d-flex">
        <div class="winbtn"><svg viewBox="0 0 14 12"><path d="M3 8h8v2H3z" fill="#fff" stroke="#51677e" stroke-width=".6"/></svg></div>
        <div class="winbtn"><svg viewBox="0 0 14 12"><path d="M5 1h7v6H5z" fill="none" stroke="#334458"/><path d="M2 4h7v6H2z" fill="#b6c9dc" stroke="#334458"/></svg></div>
        <div class="winbtn closer"><svg viewBox="0 0 14 12"><path d="M3 2l8 8M11 2l-8 8" stroke="#fff" stroke-width="2.400"/></svg></div>
      </div>
    </header>

    <nav class="menubar d-flex align-items-center">
      <span class="grip ms-1 me-0"></span>
      <svg class="menu-ic"><use href="#i-pptdoc"/></svg>
      <span class="menu-entry menu-first">文件(<u>F</u>)</span>
      <span class="menu-entry">编辑(<u>E</u>)</span>
      <span class="menu-entry">视图(<u>V</u>)</span>
      <span class="menu-entry">插入(<u>I</u>)</span>
      <span class="menu-entry">美化大师</span>
      <span class="menu-entry">格式(<u>O</u>)</span>
      <span class="menu-entry">工具(<u>T</u>)</span>
      <span class="menu-entry">幻灯片放映(<u>D</u>)</span>
      <span class="menu-entry">窗口(<u>W</u>)</span>
      <span class="menu-entry">帮助(<u>H</u>)</span>
      <div class="helpbox">键入需要帮助的问题<i></i></div>
      <span class="helpclose">×</span>
    </nav>

    <div class="uploader d-flex align-items-center">
      <div class="cloud d-flex align-items-center justify-content-center"><svg><use href="#i-cloud"/></svg></div>
      <div class="uptext">拖拽上传</div>
    </div>

    <div class="tbrow d-flex">
      <div class="tbar std d-flex align-items-center">
        <span class="grip"></span>
        <span class="tbtn"><svg><use href="#i-new"/></svg></span>
        <span class="tbtn"><svg><use href="#i-open"/></svg></span>
        <span class="tbtn"><svg><use href="#i-save"/></svg></span>
        <span class="tbtn"><svg><use href="#i-perm"/></svg></span>
        <span class="tsep"></span>
        <span class="tbtn"><svg><use href="#i-print"/></svg></span>
        <span class="tbtn"><svg><use href="#i-preview"/></svg></span>
        <span class="tsep wide"></span>
        <span class="tbtn"><svg><use href="#i-spell"/></svg></span>
        <span class="tbtn"><svg><use href="#i-research"/></svg></span>
        <span class="tsep"></span>
        <span class="tbtn off"><svg><use href="#i-cut"/></svg></span>
        <span class="tbtn off"><svg><use href="#i-copy"/></svg></span>
        <span class="tbtn"><svg><use href="#i-paste"/></svg></span>
        <span class="tbtn off"><svg><use href="#i-brush"/></svg></span>
        <span class="tsep wide"></span>
        <span class="tbtn off"><svg><use href="#i-undo"/></svg></span>
        <span class="caret-sm off"></span>
        <span class="tbtn off"><svg><use href="#i-redo"/></svg></span>
        <span class="caret-sm off"></span>
        <span class="tsep wider"></span>
        <span class="tbtn"><svg><use href="#i-chart"/></svg></span>
        <span class="tbtn"><svg><use href="#i-table"/></svg></span>
        <span class="tsep"></span>
        <span class="tbtn off"><svg><use href="#i-expand"/></svg></span>
        <span class="tbtn"><svg><use href="#i-showfmt"/></svg></span>
        <span class="tbtn"><svg><use href="#i-grid"/></svg></span>
        <span class="combo combo-zoom">87%</span>
        <span class="tsep ms-1"></span>
        <span class="tbtn"><svg><use href="#i-help"/></svg></span>
        <span class="tail"></span>
      </div>
      <div class="tbar fmt d-flex align-items-center">
        <span class="grip"></span>
        <span class="combo combo-font">宋体</span>
        <span class="combo combo-size">18</span>
        <span class="tsep wide"></span>
        <span class="tbtn"><span class="glyph">B</span></span>
        <span class="tbtn"><span class="glyph ital">I</span></span>
        <span class="tbtn"><span class="glyph under">U</span></span>
        <span class="tbtn"><span class="glyph shadowed">S</span></span>
        <span class="tsep wide"></span>
        <span class="tbtn on"><svg><use href="#i-left"/></svg></span>
        <span class="tbtn"><svg><use href="#i-center"/></svg></span>
        <span class="tbtn"><svg><use href="#i-right"/></svg></span>
        <span class="tbtn off"><svg><use href="#i-dist"/></svg></span>
        <span class="tbtn off"><svg><use href="#i-vert"/></svg></span>
        <span class="tsep wide"></span>
        <span class="tbtn"><svg><use href="#i-num"/></svg></span>
        <span class="tbtn"><svg><use href="#i-bullet"/></svg></span>
        <span class="tsep"></span>
        <span class="tbtn"><svg><use href="#i-growA"/></svg></span>
        <span class="tbtn"><svg><use href="#i-shrinkA"/></svg></span>
        <span class="tsep wide"></span>
        <span class="tbtn"><svg><use href="#i-outdent"/></svg></span>
        <span class="tbtn"><svg><use href="#i-indent"/></svg></span>
        <span class="tsep wider"></span>
        <span class="tbtn"><svg><use href="#i-fontcolor"/></svg></span>
        <span class="caret-sm"></span>
        <span class="tsep wider"></span>
        <span class="tlabel lbl-gap1"><svg><use href="#i-design"/></svg>设计(<u>S</u>)</span>
        <span class="tlabel lbl-gap"><svg><use href="#i-newslide"/></svg>新幻灯片(<u>N</u>)</span>
        <span class="tail"></span>
      </div>
    </div>

    <div class="tbrow d-flex">
      <div class="tbar ext d-flex align-items-center">
        <span class="grip"></span>
        <span class="tbtn"><svg><use href="#i-newsun"/></svg></span>
        <span class="tsep"></span>
        <span class="tbtn"><svg><use href="#i-pic1"/></svg></span>
        <span class="tbtn"><svg><use href="#i-pic2"/></svg></span>
        <span class="tbtn"><svg><use href="#i-pic3"/></svg></span>
        <span class="tbtn"><svg><use href="#i-pic4"/></svg></span>
        <span class="tsep wider"></span>
        <span class="tbtn"><svg><use href="#i-wand"/></svg></span>
        <span class="tsep wider"></span>
        <span class="tbtn"><svg><use href="#i-layout"/></svg></span>
        <span class="tsep wider"></span>
        <span class="tlabel">排列形状<i class="caret-in"></i></span>
        <span class="tlabel">统一宽高<i class="caret-in"></i></span>
        <span class="tsep wider"></span>
        <span class="tbtn"><svg><use href="#i-fontsw"/></svg></span>
        <span class="tsep wider"></span>
        <span class="tlabel">删除动画<i class="caret-in"></i></span>
        <span class="tlabel">删除页切换<i class="caret-in"></i></span>
        <span class="tlabel">删除备注<i class="caret-in"></i></span>
        <span class="tsep wider"></span>
        <span class="tbtn"><svg><use href="#i-import"/></svg></span>
        <span class="tsep wider"></span>
        <span class="tlabel">导出拼图<i class="caret-in"></i></span>
        <span class="tlabel lbl-gap1">导出图片<i class="caret-in"></i></span>
        <span class="tsep wider"></span>
        <span class="tlabel"><svg><use href="#i-person"/></svg>关于</span>
        <span class="tail"></span>
      </div>
    </div>

    <main class="workspace d-flex">
      <aside class="leftcol d-flex flex-column">
        <div class="tabstrip">
          <span class="pane-tab tab-outline">大纲</span>
          <span class="pane-tab tab-slides">幻灯片</span>
          <span class="stripclose">×</span>
        </div>
        <div class="thumbs d-flex">
          <div class="thumbnum">1</div>
          <div class="thumbframe"><div></div></div>
        </div>
        <div class="viewbar d-flex">
          <span class="viewbtn on"><svg><use href="#i-normal"/></svg></span>
          <span class="viewbtn"><svg><use href="#i-sorter"/></svg></span>
          <span class="viewbtn"><svg><use href="#i-show"/></svg></span>
          <span class="viewfill"></span>
          <div class="hscroll d-flex justify-content-between align-items-center"><span>◀</span><span>▶</span></div>
        </div>
      </aside>
      <div class="vsplit"></div>
      <section class="centercol d-flex flex-column">
        <div class="canvasarea d-flex justify-content-center">
          <div class="slide">
            <div class="holder holder-title">单击此处添加标题</div>
            <div class="holder holder-sub">单击此处添加副标题</div>
          </div>
        </div>
        <div class="notes-gap"></div>
        <div class="notes">单击此处添加备注
          <div class="vscroll d-flex flex-column justify-content-between"><span>▲</span><span>▼</span></div>
        </div>
      </section>
      <div class="hsplit"></div>
      <aside class="taskpane">
        <div class="taskhead d-flex align-items-center">
          <span class="grip"></span>开始工作
          <span class="tri"></span>
          <span class="stripclose">×</span>
        </div>
        <div class="tasknav d-flex align-items-center">
          <svg><use href="#i-back"/></svg><i></i>
          <svg><use href="#i-fwd"/></svg><i></i>
          <svg><use href="#i-home"/></svg>
        </div>
        <div class="taskcard">
          <div class="officehead d-flex">
            <svg><use href="#i-logo"/></svg>
            <div class="office-word"><small>Microsoft</small><b>Office</b><span> Online</span></div>
          </div>
          <div class="cardbar"></div>
          <div class="cardbody">
            <div class="tp-link dot">连接到 <span class="mono">Microsoft Office Online</span></div>
            <div class="tp-link dot gap5">获取有关使用 <span class="mono">PowerPoint</span> 的最新新闻</div>
            <div class="tp-link dot">自动从网站更新此列表</div>
            <div class="tp-link muted">其他<span class="mono">...</span></div>
            <div class="tp-label gap12">搜索:</div>
            <div class="tp-search d-flex align-items-center">
              <input type="text" class="form-control">
              <span class="go-btn"><svg><use href="#i-go"/></svg></span>
            </div>
            <div class="tp-label">示例:<span class="tp-example"><span class="qt">“</span>打印多个副本<span class="qt">”</span></span></div>
          </div>
        </div>
        <div class="sechead">打开</div>
        <div class="secbody">
          <div class="tp-link gap6">新建 <span class="mono">Microsoft PowerPoint</span> 演示文稿<span class="mono">.ppt</span></div>
          <div class="tp-link"><span class="mono">jiaqi.ppt</span></div>
          <div class="tp-link gap5">月度工作总结-4月份视频邹业胜<span class="mono">.ppt</span></div>
          <div class="tp-link">月度工作总结-5月份视频邹业胜 <span class="mono">.ppt</span></div>
          <div class="tp-link gap3"><svg class="tp-ic"><use href="#i-open"/></svg>其他<span class="mono">...</span></div>
          <div class="secdiv"></div>
          <div class="tp-link"><svg class="tp-ic"><use href="#i-new"/></svg>新建演示文稿<span class="mono">...</span></div>
        </div>
      </aside>
      <div class="pane-edge"></div>
    </main>

    <div class="tbrow d-flex">
      <div class="tbar drawbar d-flex align-items-center">
        <span class="grip"></span>
        <span class="tlabel">绘图(<u>R</u>)<i class="caret-in"></i></span>
        <span class="tbtn on"><svg><use href="#i-cursor"/></svg></span>
        <span class="tsep ms-1"></span>
        <span class="tlabel">自选图形(<u>U</u>)<i class="caret-in"></i></span>
        <span class="tbtn"><svg><use href="#i-line"/></svg></span>
        <span class="tbtn"><svg><use href="#i-arrowline"/></svg></span>
        <span class="tbtn"><svg><use href="#i-rect"/></svg></span>
        <span class="tbtn"><svg><use href="#i-oval"/></svg></span>
        <span class="tbtn"><svg><use href="#i-textbox"/></svg></span>
        <span class="tbtn"><svg><use href="#i-vtext"/></svg></span>
        <span class="tbtn"><svg><use href="#i-wordart"/></svg></span>
        <span class="tbtn"><svg><use href="#i-diagram"/></svg></span>
        <span class="tbtn"><svg><use href="#i-clipart"/></svg></span>
        <span class="tbtn"><svg><use href="#i-picture"/></svg></span>
        <span class="tsep widest"></span>
        <span class="tbtn"><svg><use href="#i-fill"/></svg></span>
        <span class="caret-sm"></span>
        <span class="tbtn"><svg><use href="#i-pen"/></svg></span>
        <span class="caret-sm"></span>
        <span class="tbtn"><svg><use href="#i-fontcolor"/></svg></span>
        <span class="caret-sm"></span>
        <span class="tbtn"><svg><use href="#i-lines"/></svg></span>
        <span class="tbtn"><svg><use href="#i-dash"/></svg></span>
        <span class="tbtn"><svg><use href="#i-arrows"/></svg></span>
        <span class="tbtn"><svg><use href="#i-shadow"/></svg></span>
        <span class="tbtn"><svg><use href="#i-threed"/></svg></span>
        <span class="tail"></span>
      </div>
    </div>

    <div class="statusbar d-flex">
      <div class="statcell w244">幻灯片 <span class="mono">1 / 1</span></div>
      <div class="statcell w244">默认设计模板</div>
      <div class="statcell w177">中文(中国)</div>
      <div class="statcell w30"></div>
    </div>

    <footer class="taskbar d-flex align-items-center">
      <span class="tk-slot tk-first"><svg><use href="#t-orb"/></svg></span>
      <span class="tk-slot tk-second"><svg><use href="#t-color"/></svg></span>
      <span class="tk-slot"><svg><use href="#t-play"/></svg></span>
      <span class="tk-slot"><svg><use href="#t-qq"/></svg></span>
      <span class="tk-slot"><svg><use href="#t-red"/></svg></span>
      <span class="tk-slot"><svg><use href="#t-folder"/></svg></span>
      <span class="tk-slot tk-open start"><svg><use href="#t-ie"/></svg></span>
      <span class="tk-slot tk-open"><svg><use href="#t-fox"/></svg></span>
      <span class="tk-slot tk-open"><svg><use href="#t-quill"/></svg></span>
      <span class="tk-slot tk-open tk-lit"><svg><use href="#t-ppt"/></svg></span>
      <div class="tray d-flex align-items-center">
        <span class="tray-ch">CH</span>
        <span class="tray-cell w19"><svg><use href="#y-kbd"/></svg></span>
        <span class="tray-cell w26"><svg><use href="#y-help"/></svg></span>
        <span class="tray-cell w16"><svg><use href="#y-win"/></svg></span>
        <span class="tray-cell w22"><svg><use href="#y-up"/></svg></span>
        <span class="tray-cell w26"><svg><use href="#y-weather"/></svg></span>
        <span class="tray-cell w23"><svg><use href="#y-qq"/></svg></span>
        <span class="tray-cell w25"><svg><use href="#y-qq"/></svg></span>
        <span class="tray-cell"><svg><use href="#y-360"/></svg></span>
        <span class="tray-cell"><svg><use href="#y-net"/></svg></span>
        <span class="tray-cell"><svg><use href="#y-vol"/></svg></span>
        <div class="clock">13:12<br>2015/6/19</div>
        <div class="show-desk"></div>
      </div>
    </footer>

    <ul class="ctx dropdown-menu show list-unstyled">
      <li><a class="dropdown-item disabled"><svg><use href="#i-cut"/></svg>剪切(<u>T</u>)</a></li>
      <li><a class="dropdown-item disabled"><svg><use href="#i-copy"/></svg>复制(<u>C</u>)</a></li>
      <li><a class="dropdown-item"><svg><use href="#i-paste"/></svg>粘贴(<u>P</u>)</a></li>
      <li><hr class="dropdown-divider"></li>
      <li><a class="dropdown-item">标尺(<u>R</u>)</a></li>
      <li><a class="dropdown-item">网格和参考线(<u>I</u>)...</a></li>
      <li><hr class="dropdown-divider"></li>
      <li><a class="dropdown-item"><svg><use href="#i-design"/></svg>幻灯片设计(<u>D</u>)...</a></li>
      <li><a class="dropdown-item"><svg><use href="#i-slayout"/></svg>幻灯片版式(<u>L</u>)...</a></li>
      <li><a class="dropdown-item lit">背景(<u>K</u>)...</a></li>
      <li><hr class="dropdown-divider"></li>
      <li><a class="dropdown-item"><svg><use href="#i-transition"/></svg>幻灯片切换(<u>T</u>)...</a></li>
    </ul>
  </div>
</body>

</html>
